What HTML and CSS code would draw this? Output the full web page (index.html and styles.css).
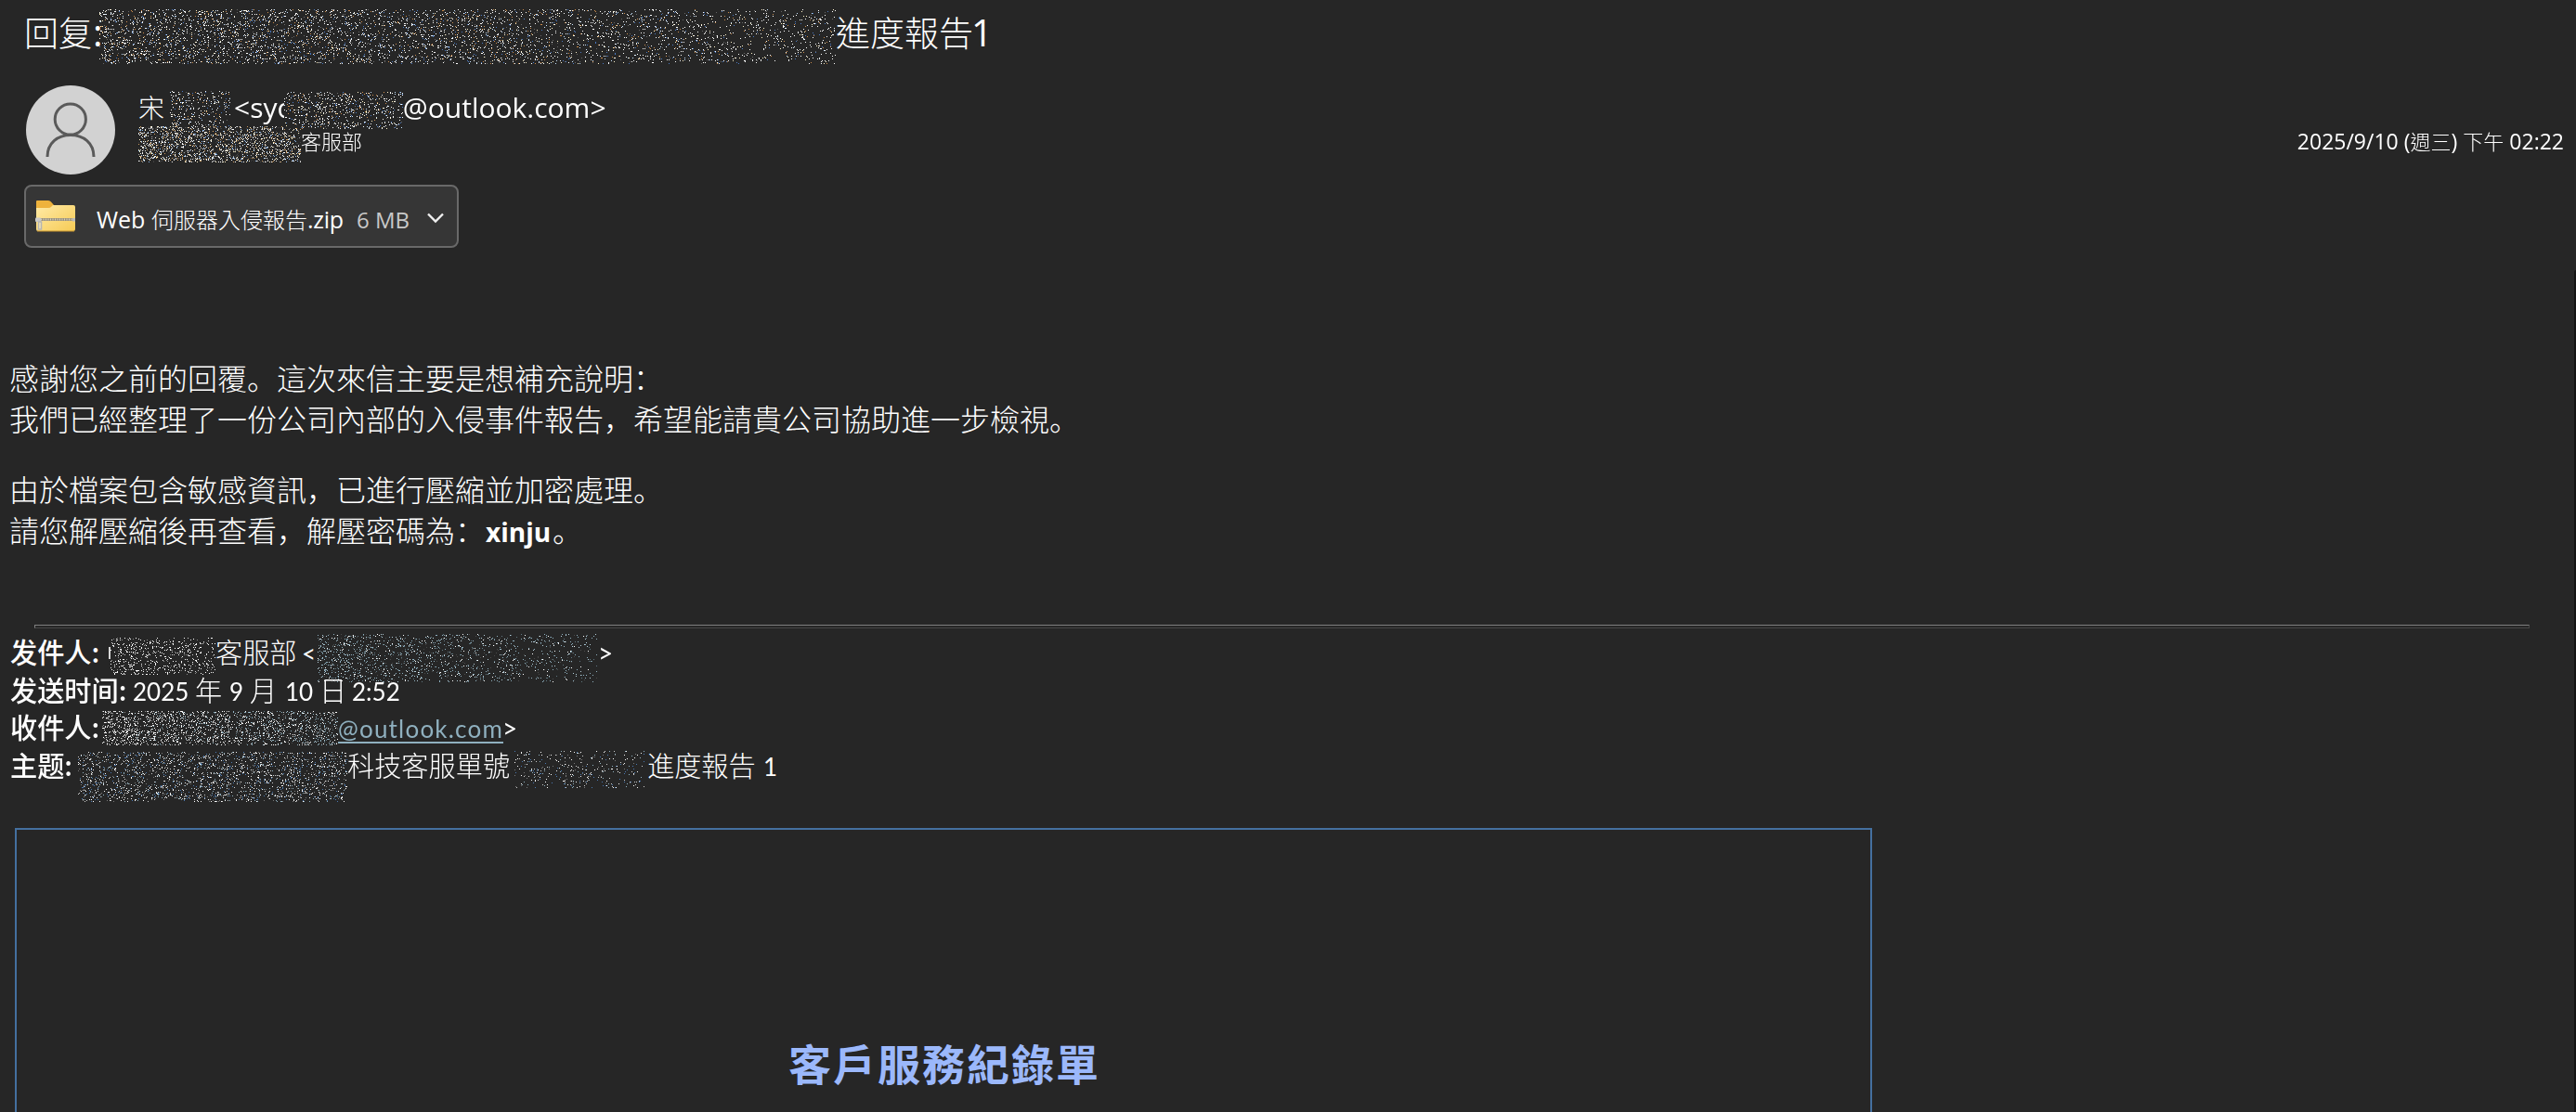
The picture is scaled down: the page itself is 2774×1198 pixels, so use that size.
FILE: index.html
```
<!DOCTYPE html>
<html lang="zh-Hant">
  <head>
    <meta charset="utf-8">
    <title>回复: 進度報告1</title>
    <link rel="stylesheet" href="styles.css">
    <script type="text/javascript" src="noise.js"></script>
  </head>
  <body>
    <div class="subject line">
      <span class="cjk re">回复</span><span class="colon">:</span>
      <canvas class="noise" width="793" height="59" data-from="0.14" data-to="0.05" data-tone="warm"></canvas>
      <span class="cjk">進度報告</span><span class="num">1</span>
    </div>
    <div class="sender">
      <svg class="avatar" width="96" height="96" viewBox="0 0 96 96">
        <circle cx="48" cy="48" r="48" fill="#d2d2d2"/>
        <g fill="none" stroke="#5a5a5a" stroke-width="3">
          <ellipse cx="47.8" cy="36.5" rx="16.6" ry="16.6"/>
          <path d="M23 77 C23 62 34 53.500 48 53.500 C62 53.500 73 62 73 77"/>
        </g>
      </svg>
      <div class="who">
        <div class="name line">
          <span class="cjk song">宋</span>
          <canvas class="noise" width="65" height="39" data-from="0.12" data-to="0.1" data-tone="warm"></canvas>
          <span class="user">&lt;syc</span>
          <canvas class="noise user-noise" width="128" height="40" data-from="0.12" data-to="0.12" data-tone="warm"></canvas>
          <span>@outlook.com&gt;</span>
        </div>
        <div class="to line">
          <canvas class="noise" width="175" height="39" data-from="0.32" data-to="0.24" data-tone="grey"></canvas>
          <span class="cjk">客服部</span>
        </div>
      </div>
      <div class="date line">
        <span class="day">2025/9/10 (</span><span class="cjk">週三</span><span class="paren">)</span><span class="cjk ampm">下午</span><span>02:22</span>
      </div>
    </div>
    <div class="attachment line">
      <svg class="zip" width="43" height="36" viewBox="0 0 43 36">
        <defs>
          <linearGradient id="folder" x1="0" y1="0" x2="1" y2="1">
            <stop offset="0" stop-color="#ffeaa6"/>
            <stop offset="1" stop-color="#f6cb55"/>
          </linearGradient>
        </defs>
        <path d="M1 2 Q1 1 2 1 H14 Q16 1 17 2.500 L20 6 V12 H1 Z" fill="#eeb23c"/>
        <path d="M1 9 H14 Q16 9 17.500 7.500 L19 6 H41 Q43 6 43 8 V32 Q43 34 41 34 H3 Q1 34 1 32 Z" fill="url(#folder)"/>
        <path d="M2 34 H42" stroke="#c9962e" stroke-width="1"/>
        <path d="M1 21.500 H43" stroke="#9b927b" stroke-width="3"/>
        <path d="M6 21.500 H43" stroke="#d5d0c0" stroke-width="2" stroke-dasharray="1 1.500"/>
        <rect x="0" y="19.500" width="6" height="4.500" rx="1" fill="#c9c9c9"/>
        <rect x="40" y="20" width="3" height="3.500" fill="#b9b9b9"/>
        <path d="M3.500 24 H6.500 V32 H3.500 Z" fill="#f3e5b5" stroke="#b5b5b5" stroke-width="1.500"/>
      </svg>
      <span class="web">Web</span><span class="cjk">伺服器入侵報告</span><span class="ext">.zip</span><span class="size">6 MB</span>
      <svg class="chevron" width="20" height="14" viewBox="0 0 20 14">
        <path d="M2 2.500 L10 10.500 L18 2.500" fill="none" stroke="#f0f0f0" stroke-width="2.400"/>
      </svg>
    </div>
    <div class="message" lang="zh-Hans">
      <p>感謝您之前的回覆。這次來信主要是想補充說明：<br>我們已經整理了一份公司內部的入侵事件報告，希望能請貴公司協助進一步檢視。</p>
      <p>由於檔案包含敏感資訊，已進行壓縮並加密處理。<br>請您解壓縮後再查看，解壓密碼為：<b>xinju</b>。</p>
    </div>
    <div class="rule"></div>
    <div class="quoted" lang="zh-Hans">
      <div class="line">
        <b class="from">发件人:</b>
        <span class="sliver"></span>
        <canvas class="noise from-noise" width="113" height="40" data-from="0.14" data-to="0.1" data-tone="white"></canvas>
        <span class="dept">客服部</span><span class="latin lt">&lt;</span>
        <canvas class="noise mail-noise" width="301" height="52" data-from="0.15" data-to="0.04" data-tone="teal"></canvas>
        <span class="latin gt">&gt;</span>
      </div>
      <div class="line">
        <b class="sent">发送时间:</b>
        <span class="latin year">2025</span><span class="y">年</span><span class="latin month">9</span><span class="m">月</span><span class="latin dd">10</span><span class="d">日</span><span class="latin">2:52</span>
      </div>
      <div class="line">
        <b class="rcpt">收件人:</b>
        <canvas class="noise rcpt-noise" width="254" height="37" data-from="0.21" data-to="0.17" data-tone="teal-right"></canvas>
        <a class="latin mail" href="#">@outlook.com</a><span class="latin gt">&gt;</span>
      </div>
      <div class="line">
        <b class="subj">主题:</b>
        <canvas class="noise subj-noise" width="290" height="54" data-from="0.13" data-to="0.13" data-tone="blue"></canvas>
        <span class="ticket">科技客服單號</span>
        <canvas class="noise ticket-noise" width="140" height="40" data-from="0.07" data-to="0.04" data-tone="blue"></canvas>
        <span class="progress">進度報告</span><span class="latin">1</span>
      </div>
    </div>
    <div class="record">
      <h1>客戶服務紀錄單</h1>
    </div>
    <div class="scroll"></div>
  </body>
</html>
```
FILE: styles.css
```
body {
  margin: 0;
  height: 1198px;
  overflow: hidden;
  position: relative;
  background: #262626;
  color: #fff;
  font-family: "Open Sans", "Noto Sans CJK TC", sans-serif;
}
.line {
  display: flex;
  align-items: baseline;
  white-space: nowrap;
}
.cjk {
  font-family: "Noto Sans CJK TC", sans-serif;
  font-weight: 300;
}
.noise {
  display: block;
  flex: none;
  align-self: flex-start;
}
/* BEGIN header */
.subject {
  padding: 10px 0 0 26px;
  height: 92px;
  box-sizing: border-box;
  font-size: 40px;
  line-height: 48px;
}
.subject .cjk { font-size: 37px }
.subject .re { width: 74px }
.subject .colon { width: 7px }
.subject .num { margin-left: -2px }
.sender {
  display: flex;
  height: 107px;
  padding: 0 13px 0 28px;
}
.avatar {
  display: block;
  flex: none;
  margin-right: 25px;
}
.who { flex: 1 }
.name {
  height: 38px;
  padding-top: 6px;
  font-size: 30px;
  line-height: 35px;
}
.name .cjk { font-size: 28px }
.song { width: 34px }
.user { margin-left: 4px }
/* runs over the end of the user name */
.user-noise {
  margin: 1px 0 0 -7px;
  background: #262626;
  z-index: 1;
}
.to {
  font-size: 23px;
  line-height: 30px;
}
.to .cjk, .date .cjk { font-size: 22px }
.date {
  padding-top: 44px;
  font-size: 23px;
  line-height: 30px;
}
.ampm { margin: 0 6px }
.attachment {
  width: 468px;
  height: 68px;
  box-sizing: border-box;
  margin-left: 26px;
  border: 2px solid #696969;
  border-radius: 8px;
  background: #363636;
  font-size: 25px;
  line-height: 69px;
}
.attachment .cjk { font-size: 24px }
.zip {
  align-self: flex-start;
  margin: 14px 0 0 10px;
}
.web { width: 59px; margin-left: 23px }
.ext { width: 53px; letter-spacing: -0.3px }
.size { width: 75px; font-size: 24px; color: #c8c8c8 }
.chevron { align-self: flex-start; margin-top: 27px }
/* END header */
.message {
  height: 289px;
  padding: 117px 0 0 10px;
  font: 300 32px/44px "Noto Sans CJK SC", sans-serif;
}
.message p { margin: 0 0 32px 0 }
.message b { margin: 0 2px 0 1px; font: bold 28px/43px "Open Sans", sans-serif }
.rule {
  width: 2687px;
  height: 4px;
  box-sizing: border-box;
  margin-left: 37px;
  border: 1px solid #808080;
  border-right-color: #454545;
  border-bottom-color: #454545;
}
/* BEGIN quoted header */
.quoted {
  height: 211px;
  padding: 4px 0 0 11px;
  font: 300 29.2px/40.7px "Noto Sans CJK SC", sans-serif;
}
.quoted .line { height: 40.7px }
.quoted b { font-weight: 500 }
.latin {
  font-family: Lato, sans-serif;
  font-size: 26px;
  font-weight: 400;
}
.gt { font-size: 28px }
.from { width: 106px }
.sliver {
  align-self: flex-start;
  width: 2px;
  height: 13px;
  margin-top: 16px;
  background: #d8d8d8;
}
.from-noise { margin-top: 6px }
.dept { width: 93px }
.lt { width: 17px }
.mail-noise { margin: 2px 1px 0 0 }
.sent { width: 132px }
.year { width: 67px }
.y { width: 37px }
.month { width: 22px }
.m { width: 38px }
.dd { width: 37px }
.d { width: 35px }
.rcpt { width: 99px }
.rcpt-noise { margin-top: 4px }
.mail {
  width: 177px;
  letter-spacing: 1.2px;
  color: #8fb0bf;
  text-decoration: underline 2px;
  text-underline-offset: 4px;
}
.subj { width: 73px }
.subj-noise { margin-top: 7px }
.ticket { width: 180px }
.ticket-noise { margin: 6px 3px 0 0 }
.progress { width: 125px }
/* END quoted header */
.record {
  width: 2000px;
  height: 306px;
  box-sizing: border-box;
  margin-left: 16px;
  padding-top: 217px;
  border: 2px solid #44709f;
  border-bottom: 0;
}
.record h1 {
  margin: 0;
  padding-left: 831px;
  font: bold 46px/66px "Noto Sans CJK TC", sans-serif;
  letter-spacing: 2px;
  color: #9bb8fb;
}
.scroll {
  position: absolute;
  top: 291px;
  right: 0;
  width: 2px;
  height: 907px;
  border-top-left-radius: 2px;
  background: #131313;
}
```
FILE: noise.js
```
var seed=20250910;
function rnd() {
  seed=(seed*1103515245+12345)%2147483648;
  return seed/2147483648;
}
var TONES={
  warm: ["#ffffff","#ffffff","#ffffff","#ffffff","#fff3c9","#c8e4ff","#ffffff","#c98a4a","#4a78c0","#666666"],
  grey: ["#ffffff","#e8e8e8","#444444","#3a3a3a","#ffffff","#3a3a3a","#a0a0a0","#8fb8e8","#c99a60","#fff3c9"],
  white: ["#ffffff","#f4f4f4","#d0d0d0","#888888","#ffffff"],
  teal: ["#8fb0bf","#8fb0bf","#b4ced9","#ffffff","#5f7680","#4a4a4a"],
  blue: ["#ffffff","#f4f4f4","#cccccc","#8fb0bf","#4a78b0","#777777"]
};
//--| fills a canvas with speckles, density runs from left to right
function Scatter(c) {
  var g=c.getContext("2d");
  var from=+c.getAttribute("data-from"), to=+c.getAttribute("data-to");
  var tone=c.getAttribute("data-tone");
  for(var y=0; y<c.height; y++) {
    for(var x=0; x<c.width; x++) {
      var t=x/c.width;
      if(rnd()>from+(to-from)*t) continue;
      var list=TONES[tone];
      if(tone=="teal-right") list=rnd()<t*0.8?TONES.teal:TONES.white;
      g.fillStyle=list[Math.floor(rnd()*list.length)];
      g.fillRect(x,y,1,1);
    }
  }
}
window.onload=function() {
  var all=document.getElementsByTagName("canvas");
  for(var i=0; i<all.length; i++) Scatter(all[i]);
}
```
